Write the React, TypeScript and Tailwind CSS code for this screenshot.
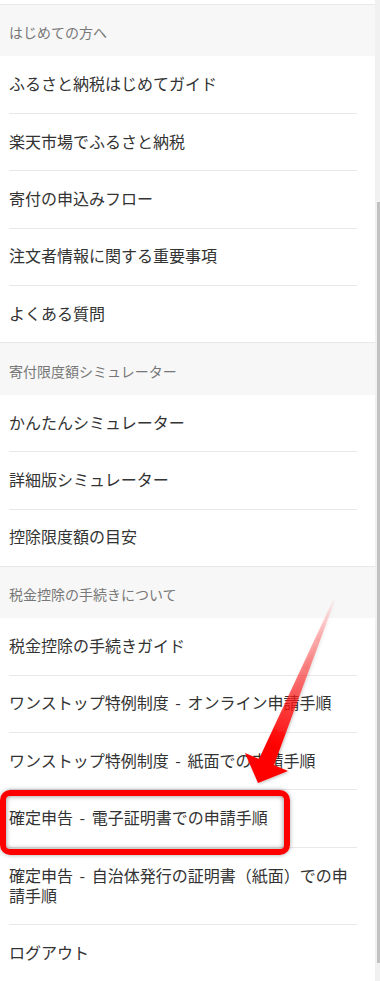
type Section = {
  title: string;
  items: string[];
};

const sections: Section[] = [
  {
    title: "はじめての方へ",
    items: [
      "ふるさと納税はじめてガイド",
      "楽天市場でふるさと納税",
      "寄付の申込みフロー",
      "注文者情報に関する重要事項",
      "よくある質問",
    ],
  },
  {
    title: "寄付限度額シミュレーター",
    items: ["かんたんシミュレーター", "詳細版シミュレーター", "控除限度額の目安"],
  },
  {
    title: "税金控除の手続きについて",
    items: [
      "税金控除の手続きガイド",
      "ワンストップ特例制度 - オンライン申請手順",
      "ワンストップ特例制度 - 紙面での申請手順",
      "確定申告 - 電子証明書での申請手順",
      "確定申告 - 自治体発行の証明書（紙面）での申請手順",
    ],
  },
];

function MenuItem({ label, last }: { label: string; last?: boolean }) {
  return (
    <li
      className={
        "ml-[9px] mr-[18px] pt-[16.8px] pb-[19.6px] pr-[2px] text-[16px] leading-[20px] text-[#333333] [word-spacing:3px] " +
        (last ? "" : "border-b border-[#e8e8e8]")
      }
    >
      {label}
    </li>
  );
}

function SectionHeader({ title }: { title: string }) {
  return (
    <div className="border-t border-[#e8e8e8] bg-[#f7f7f7] px-[9px] pt-[17.4px] pb-[14px] text-[14px] leading-[20px] text-[#777777]">
      {title}
    </div>
  );
}

function Annotation() {
  return (
    <>
      <svg
        className="pointer-events-none absolute left-0 top-0"
        width="380"
        height="981"
        viewBox="0 0 380 981"
      >
        <defs>
          <linearGradient id="arrowFade" gradientUnits="userSpaceOnUse" x1="334" y1="600" x2="272" y2="745">
            <stop offset="0" stopColor="#ff0000" stopOpacity="0.03" />
            <stop offset="0.55" stopColor="#ff2020" stopOpacity="0.6" />
            <stop offset="1" stopColor="#ff0000" stopOpacity="1" />
          </linearGradient>
          <filter id="arrowShadow" x="-20%" y="-20%" width="140%" height="140%">
            <feDropShadow dx="1" dy="1" stdDeviation="1.5" floodColor="#000" floodOpacity="0.25" />
          </filter>
        </defs>
        <polygon
          points="333,600 335,600 274,765 288,771 258,783 245,753 259,759"
          fill="url(#arrowFade)"
          filter="url(#arrowShadow)"
        />
      </svg>
      <div className="pointer-events-none absolute left-0 top-[790px] h-[65px] w-[290px] rounded-[10px] border-[6px] border-[#ff0000] shadow-[0_0_4px_rgba(0,0,0,0.35),inset_0_0_5px_rgba(0,0,0,0.45)]" />
    </>
  );
}

export default function App() {
  return (
    <div
      className="relative flex h-[981px] w-[380px] overflow-hidden bg-white"
      style={{ fontFamily: '"Noto Sans CJK JP", "Noto Sans", sans-serif' }}
    >
      <div className="w-[375px] shrink-0">
        <div className="h-[4px]" />
        {sections.map((section) => (
          <div key={section.title}>
            <SectionHeader title={section.title} />
            <ul>
              {section.items.map((item, i) => (
                <MenuItem
                  key={item}
                  label={item}
                  last={i === section.items.length - 1 && section.title !== "税金控除の手続きについて"}
                />
              ))}
            </ul>
          </div>
        ))}
        <ul>
          <MenuItem label="ログアウト" last />
        </ul>
      </div>
      <div className="flex w-[5px] shrink-0 flex-col bg-[#f1f1f1]">
        <div className="mt-[202px] ml-[2px] h-[761px] w-[3px] bg-[#c1c1c1]" />
      </div>
      <Annotation />
    </div>
  );
}
